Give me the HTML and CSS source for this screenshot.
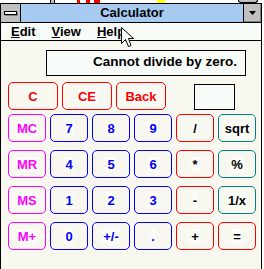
FILE: index.html
```html
<!DOCTYPE html>
<html>
<head>
<meta charset="utf-8">
<title>Calculator</title>
<link rel="stylesheet" href="styles.css">
</head>
<body>
<div class="desk">
  <span class="bit b1"></span>
  <span class="bit b2"></span>
  <span class="bit b3"></span>
  <span class="bit b4"></span>
  <span class="bit b5"></span>
  <span class="bit b6"></span>
</div>
<div class="window">
  <div class="titlebar">
    <div class="sysbox"><span class="sysbar"></span></div>
    <div class="title">Calculator</div>
    <div class="minbtn"><svg width="7" height="4" viewBox="0 0 7 4"><polygon points="0,0 7,0 3.5,4" fill="#000"/></svg></div>
  </div>
  <div class="menubar">
    <span class="menu"><u>E</u>dit</span>
    <span class="menu"><u>V</u>iew</span>
    <span class="menu"><u>H</u>elp</span>
  </div>
  <div class="client">
    <div class="display">Cannot divide by zero.</div>
    <div class="toprow">
      <div class="btn wide red"><span class="lbl">C</span></div>
      <div class="btn wide red"><span class="lbl">CE</span></div>
      <div class="btn wide red"><span class="lbl">Back</span></div>
      <div class="membox"></div>
    </div>
    <div class="grid">
      <div class="btn mag"><span class="lbl">MC</span></div>
      <div class="btn blue"><span class="lbl">7</span></div>
      <div class="btn blue"><span class="lbl">8</span></div>
      <div class="btn blue"><span class="lbl">9</span></div>
      <div class="btn red op"><span class="lbl">/</span></div>
      <div class="btn teal op"><span class="lbl">sqrt</span></div>

      <div class="btn mag"><span class="lbl">MR</span></div>
      <div class="btn blue"><span class="lbl">4</span></div>
      <div class="btn blue"><span class="lbl">5</span></div>
      <div class="btn blue"><span class="lbl">6</span></div>
      <div class="btn red op"><span class="lbl">*</span></div>
      <div class="btn teal op"><span class="lbl">%</span></div>

      <div class="btn mag"><span class="lbl">MS</span></div>
      <div class="btn blue"><span class="lbl">1</span></div>
      <div class="btn blue"><span class="lbl">2</span></div>
      <div class="btn blue"><span class="lbl">3</span></div>
      <div class="btn red op"><span class="lbl">-</span></div>
      <div class="btn teal op"><span class="lbl">1/x</span></div>

      <div class="btn mag"><span class="lbl">M+</span></div>
      <div class="btn blue"><span class="lbl">0</span></div>
      <div class="btn blue"><span class="lbl">+/-</span></div>
      <div class="btn blue"><span class="lbl">.</span></div>
      <div class="btn red op"><span class="lbl">+</span></div>
      <div class="btn red op"><span class="lbl">=</span></div>
    </div>
  </div>
  <svg class="cursor" width="14" height="22" viewBox="0 0 14 22"><polygon points="0.5,0.5 0.5,16.5 4.5,12.5 7.5,19.5 10,18.5 7.5,11.5 12.5,11.5" fill="#fff" stroke="#000" stroke-width="1"/></svg>
</div>
</body>
</html>
```
FILE: styles.css
```css
html, body {
  margin: 0;
  padding: 0;
  background: #ffffff;
}
body {
  height: 269px;
  overflow: hidden;
  font-family: "Liberation Sans", Arial, sans-serif;
  font-weight: bold;
  font-size: 13px;
  color: #000;
}
.desk {
  position: relative;
  height: 3px;
}
.bit {
  position: absolute;
  top: 0;
  height: 3px;
}
.b1 { left: 50px; width: 3px; background: #c0c0c0; border-left: 1px solid #000; border-right: 1px solid #000; }
.b2 { left: 77px; width: 3px; background: #ff0000; }
.b3 { left: 86px; width: 4px; background: #ff0000; }
.b4 { left: 94px; width: 6px; background: #ff0000; }
.b5 { left: 157px; width: 8px; background: #ffff00; }
.b6 { left: 238px; width: 18px; background: #c0c0c0; border: 1px solid #000; border-top: none; border-radius: 0 0 3px 3px; height: 2px; }
.window {
  position: relative;
  width: 260px;
  height: 266px;
  border: 1px solid #000;
  border-bottom: none;
  background: #f8f8f0;
}
.titlebar {
  display: flex;
  height: 18px;
  border-bottom: 1px solid #000;
}
.sysbox {
  width: 19px;
  background: #c0c0c0;
  border-right: 1px solid #000;
  display: flex;
  align-items: center;
  justify-content: center;
}
.sysbar {
  width: 11px;
  height: 2px;
  background: #fff;
  border: 1px solid #000;
  box-shadow: 1px 1px 0 #808080;
}
.title {
  flex: 1;
  background: #a6caf0;
  text-align: center;
  line-height: 18px;
}
.minbtn {
  width: 17px;
  background: #c0c0c0;
  border-left: 1px solid #000;
  display: flex;
  align-items: center;
  justify-content: center;
  box-shadow: inset -1px -1px 0 #808080;
}
.menubar {
  display: flex;
  gap: 16px;
  height: 17px;
  line-height: 17px;
  padding-left: 10px;
  background: #f8fcf8;
  border-bottom: 1px solid #000;
}
.client {
  padding: 9px 0 0 7px;
}
.display {
  box-sizing: border-box;
  margin-left: 38px;
  width: 200px;
  height: 26px;
  border: 1px solid #000;
  background: #f8fcf8;
  text-align: right;
  padding-right: 8px;
  line-height: 22px;
  font-size: 13.5px;
}
.toprow {
  display: flex;
  align-items: flex-end;
  gap: 4px;
  margin-top: 6px;
}
.btn {
  box-sizing: border-box;
  border: 1px solid;
  border-radius: 5px;
  display: flex;
  align-items: center;
  justify-content: center;
  background: #f8f8f0;
}
.wide {
  width: 50px;
  height: 28px;
}
.membox {
  box-sizing: border-box;
  width: 41px;
  height: 26px;
  border: 1px solid #000;
  background: #f8fcf8;
  margin-left: 24px;
}
.grid {
  display: grid;
  grid-template-columns: repeat(6, 38px);
  grid-auto-rows: 28px;
  column-gap: 4px;
  row-gap: 8px;
  margin-top: 4px;
}
.lbl {
  background: #fbfdf9;
  padding: 0 1px;
  line-height: 15px;
}
.red { border-color: #ff0000; color: #ff0000; }
.mag { border-color: #ff00ff; color: #ff00ff; }
.blue { border-color: #0000ff; color: #0000ff; }
.teal { border-color: #008080; }
.op { color: #000; }
.cursor {
  position: absolute;
  left: 120px;
  top: 23px;
}
```
